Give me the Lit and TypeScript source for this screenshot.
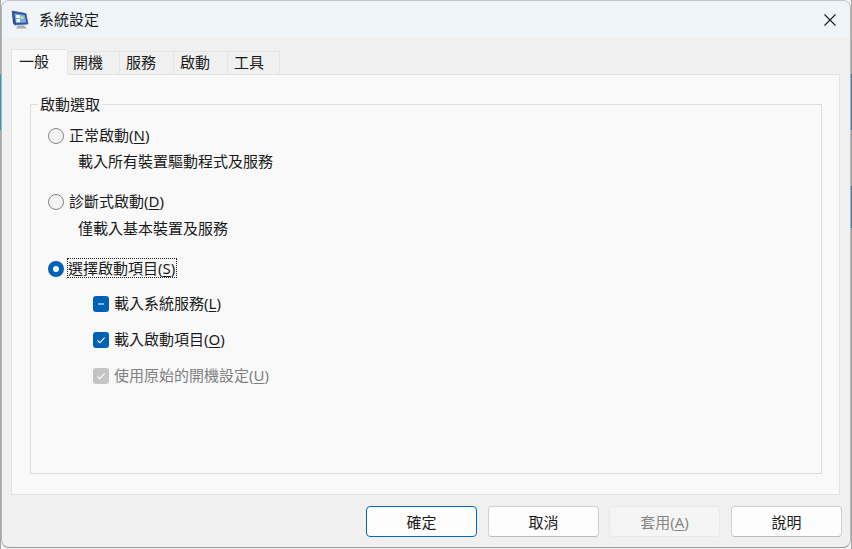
import { LitElement, html, css } from "lit";
import { customElement } from "lit/decorators.js";

@customElement("app-root")
export class AppRoot extends LitElement {
  static styles = css`
    :host {
      display: block; width: 852px; height: 549px; font-family: "Noto Sans", "Noto Sans CJK TC", sans-serif; font-size: 15px; line-height: 20px; color: #1a1a1a;
      background:
        linear-gradient(to bottom, #a8a8a8 74px, #2f97c6 74px, #2f97c6 130px, #a8a8a8 130px) left top / 1px 100% no-repeat,
        linear-gradient(to bottom, #a8a8a8 74px, #2f7f98 74px, #2f7f98 130px, #a8a8a8 130px, #a8a8a8 186px, #2f7f98 186px, #2f7f98 228px, #a8a8a8 228px) right top / 1px 100% no-repeat,
        #f4f4f4;
    }
    * { box-sizing: border-box; }
    .win { width: 850px; height: 548px; margin-left: 1px; background: #f0f0f0; border: 1px solid #b4b4b4; border-top-color: #c4c4c4; border-bottom-color: #9c9c9c; border-radius: 8px; overflow: hidden; display: flex; flex-direction: column; }
    .title { height: 37px; flex: none; background: #eef4f8; display: flex; align-items: center; padding-left: 9px; }
    .title .ttl { margin-left: 9px; margin-top: -1px; }
    .close { margin-left: auto; margin-right: 14px; display: flex; }
    .tabs { display: flex; align-items: flex-end; height: 37px; padding-left: 9px; flex: none; position: relative; z-index: 1; }
    .tab { height: 23px; border: 1px solid #e4e4e4; border-left: none; border-bottom: none; display: flex; align-items: center; padding: 0 0 2px 6px; background: #f0f0f0; margin-bottom: 1px; }
    .tab.active { height: 26px; width: 57px; background: #f9f9f9; border: 1px solid #e4e4e4; border-bottom: none; border-radius: 2px 2px 0 0; padding: 0 0 3px 7px; margin-bottom: 0; }
    .w52 { width: 52px; }
    .w54 { width: 54px; }
    .first { padding-left: 5px; }
    .panel { width: 829px; height: 421px; margin: -1px 0 0 9px; background: #f9f9f9; border: 1px solid #e4e4e4; padding: 29px 17px 0 18px; flex: none; }
    .group { height: 370px; border: 1px solid #dcdcdc; padding: 21px 0 0 17px; position: relative; }
    .legend { position: absolute; left: 7px; top: -11px; background: #f9f9f9; padding: 0 2px; }
    .row { display: flex; align-items: center; height: 20px; }
    .label { margin-top: -2px; }
    .radio { width: 16px; height: 16px; border-radius: 50%; border: 1px solid #848484; background: #f4f4f4; flex: none; margin-right: 5px; }
    .radio.on { border: 5px solid #0062b4; background: #fff; }
    .desc { margin: 5px 0 21px 30px; }
    .desc.b { margin-top: 6px; }
    .focus { outline: 1px dotted #222; padding-right: 1px; line-height: 18px; height: 18px; display: inline-block; margin-left: -1px; }
    .checks { margin: 15px 0 0 45px; display: flex; flex-direction: column; gap: 16px; }
    .cb { width: 16px; height: 16px; border-radius: 3px; background: #0062b4; flex: none; margin-right: 5px; display: flex; align-items: center; justify-content: center; }
    .cb.dis { background: #c4c4c4; }
    .dimmed { color: #808080; }
    u { text-underline-offset: 2px; }
    .foot { flex: 1; display: flex; justify-content: flex-end; gap: 11px; padding: 11px 8px 0 0; }
    button { width: 111px; height: 31px; font: inherit; color: #1a1a1a; background: #fdfdfd; border: 1px solid #d0d0d0; border-bottom-color: #bcbcbc; border-radius: 4px; padding: 0; }
    button.def { border: 1.5px solid #0067c0; }
    button.second { margin-right: -1px; }
    button.dis { background: #f5f5f5; border-color: #e8e8e8; color: #868686; }
  `;

  render() {
    return html`<div class="win">
      <div class="title">
        <svg width="19" height="20" viewBox="0 0 19 20">
          <path d="M1 1 L15 3.500 L17 14 L3.500 15 Z" fill="#274a9f" stroke="#5a6a94" stroke-width=".8"/>
          <path d="M3.200 3.200 L13.800 5 L15.200 12.600 L5 13.200 Z" fill="#6fb0e8"/>
          <path d="M5 5h4v3H5z" fill="#e8f4ff"/><path d="M9.500 6.500h3v2.500h-3z" fill="#d9e36a"/><path d="M5.500 9h3.500v3H5.500z" fill="#ffffff"/>
          <path d="M1 1 L3.500 15 L2 13 Z" fill="#1b2f6e"/>
          <path d="M7 15.500 h6 l3 3 h-11 z" fill="#a8aaae"/>
        </svg>
        <span class="ttl">系統設定</span>
        <span class="close"><svg width="12" height="12" viewBox="0 0 12 12"><path d="M.5.5l11 11M11.500.5l-11 11" stroke="#1a1a1a" stroke-width="1.100" fill="none"/></svg></span>
      </div>
      <div class="tabs">
        <div class="tab active">一般</div>
        <div class="tab w52 first">開機</div>
        <div class="tab w54">服務</div>
        <div class="tab w54">啟動</div>
        <div class="tab w52">工具</div>
      </div>
      <div class="panel">
        <div class="group">
          <div class="legend">啟動選取</div>
          <div class="row"><span class="radio"></span><span class="label">正常啟動(<u>N</u>)</span></div>
          <div class="desc">載入所有裝置驅動程式及服務</div>
          <div class="row"><span class="radio"></span><span class="label">診斷式啟動(<u>D</u>)</span></div>
          <div class="desc b">僅載入基本裝置及服務</div>
          <div class="row"><span class="radio on"></span><span class="focus label">選擇啟動項目(<u>S</u>)</span></div>
          <div class="checks">
            <div class="row"><span class="cb"><svg width="10" height="10" viewBox="0 0 10 10"><path d="M2 5h6" stroke="#cfe0f2" stroke-width="1.300"/></svg></span><span class="label">載入系統服務(<u>L</u>)</span></div>
            <div class="row"><span class="cb"><svg width="10" height="10" viewBox="0 0 10 10"><path d="M1.500 5.300l2.300 2.300 4.800-5" stroke="#fff" stroke-width="1.100" fill="none"/></svg></span><span class="label">載入啟動項目(<u>O</u>)</span></div>
            <div class="row dimmed"><span class="cb dis"><svg width="10" height="10" viewBox="0 0 10 10"><path d="M1.500 5.300l2.300 2.300 4.800-5" stroke="#fff" stroke-width="1.100" fill="none"/></svg></span><span class="label">使用原始的開機設定(<u>U</u>)</span></div>
          </div>
        </div>
      </div>
      <div class="foot">
        <button class="def">確定</button>
        <button class="second">取消</button>
        <button class="dis" disabled>套用(<u>A</u>)</button>
        <button>說明</button>
      </div>
    </div>`;
  }
}
